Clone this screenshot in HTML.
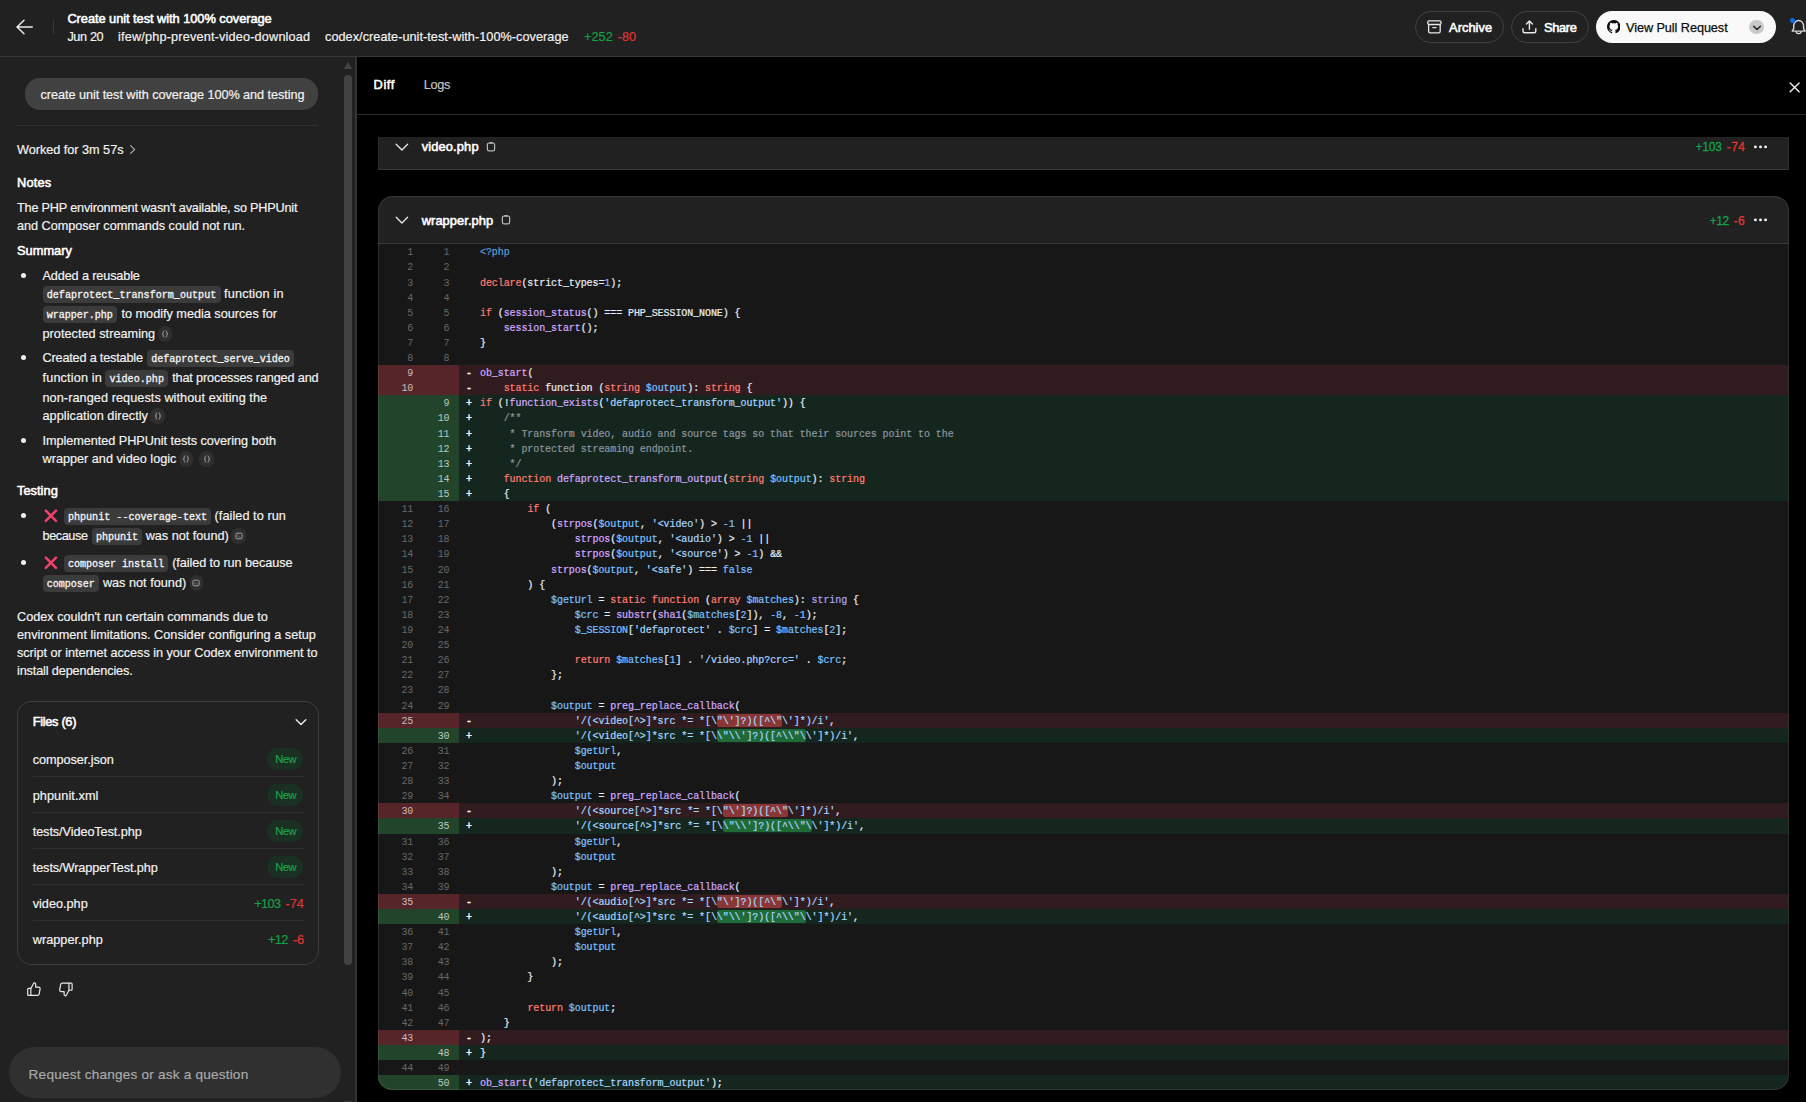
<!DOCTYPE html>
<html><head><meta charset="utf-8"><title>Create unit test with 100% coverage</title>
<style>
html,body{margin:0;padding:0;background:#212121;}
body{width:1806px;height:1102px;position:relative;overflow:hidden;font-family:"Liberation Sans",sans-serif;color:#f3f3f3;}
.a{position:absolute;}
.t{position:absolute;white-space:pre;line-height:16px;height:16px;-webkit-text-stroke:0.18px currentColor;}
.m{font-family:"Liberation Mono",monospace;}
.chip{position:absolute;background:#3b3b3b;border-radius:4px;}
.chip span{position:absolute;left:0;right:0;top:0;bottom:0;text-align:center;white-space:pre;font-family:"Liberation Mono",monospace;font-size:10.1px;color:#f4f4f4;-webkit-text-stroke:0.3px #f4f4f4;}
.cit{position:absolute;background:#2f2f2f;border-radius:7px;}
.row{position:absolute;left:377.5px;width:1411px;}
.g{position:absolute;left:0;top:0;bottom:0;width:81px;}
.n{position:absolute;top:0;bottom:0;text-align:right;font-family:"Liberation Mono",monospace;white-space:pre;}
.c{position:absolute;left:102.5px;top:0;bottom:0;white-space:pre;font-family:"Liberation Mono",monospace;-webkit-text-stroke:0.22px currentColor;}
.c span{-webkit-text-stroke:0.22px currentColor;}
.s{position:absolute;left:88.5px;top:0;bottom:0;white-space:pre;font-family:"Liberation Mono",monospace;color:#f4f8fb;-webkit-text-stroke:0.4px #f4f8fb;}
.sep{position:absolute;height:1px;background:#333333;}
</style></head><body>

<div class="a" style="left:0;top:56px;width:1806px;height:1px;background:#383838"></div>
<div class="a" style="left:356px;top:57px;width:1450px;height:1045px;background:#000"></div>
<div class="a" style="left:355px;top:57px;width:1.5px;height:1045px;background:#333"></div>
<div class="a" style="left:357px;top:114px;width:1449px;height:1px;background:#2c2c2c"></div>
<div class="a" style="left:343.6px;top:75px;width:8.7px;height:890px;background:#424242;border-radius:4.5px"></div>
<svg class="a" style="left:343px;top:61px" width="10" height="9" viewBox="0 0 10 9"><path d="M0.6 8 L5 1 L9.4 8 Z" fill="#424242"/></svg>
<div class="a" style="left:344px;top:1101px;width:8px;height:1px;background:#3c3c3c"></div>
<svg class="a" style="left:15px;top:18px" width="20" height="18" viewBox="0 0 20 18"><path d="M9 2.2 L2 9 L9 15.8 M2.2 9 H17.3" fill="none" stroke="#ececec" stroke-width="1.5" stroke-linecap="round" stroke-linejoin="round"/></svg>
<div class="a" style="left:52.5px;top:20px;width:1px;height:14px;background:#3a3a3a"></div>
<div class="a" style="left:1415.3px;top:10.8px;width:87px;height:30px;border:1px solid #404040;border-radius:16px"></div>
<div class="a" style="left:1511px;top:10.8px;width:76.2px;height:30px;border:1px solid #404040;border-radius:16px"></div>
<div class="a" style="left:1595.5px;top:11px;width:180px;height:32px;background:#f9f9f9;border-radius:16px"></div>
<svg class="a" style="left:1427px;top:20px" width="15" height="14" viewBox="0 0 15 14"><g fill="none" stroke="#e8e8e8" stroke-width="1.3" stroke-linejoin="round" stroke-linecap="round"><rect x="0.8" y="0.9" width="13.2" height="3.6" rx="1.2"/><path d="M1.6 4.6 V11.2 a1.6 1.6 0 0 0 1.6 1.6 H11.6 a1.6 1.6 0 0 0 1.6 -1.6 V4.6"/><path d="M5.8 7.6 H9"/></g></svg>
<svg class="a" style="left:1522px;top:20px" width="15" height="14" viewBox="0 0 15 14"><g fill="none" stroke="#e8e8e8" stroke-width="1.4" stroke-linejoin="round" stroke-linecap="round"><path d="M7.4 9.2 V1.2 M4.4 4 L7.4 1.1 L10.4 4"/><path d="M1 8.6 V11 a1.8 1.8 0 0 0 1.8 1.8 H12 a1.8 1.8 0 0 0 1.8 -1.8 V8.6"/></g></svg>
<svg class="a" style="left:1606.5px;top:20.3px" width="13.6" height="13.6" viewBox="0 0 16 16"><path fill="#0d0d0d" d="M8 0C3.58 0 0 3.58 0 8c0 3.54 2.29 6.53 5.47 7.59.4.07.55-.17.55-.38 0-.19-.01-.82-.01-1.49-2.01.37-2.53-.49-2.69-.94-.09-.23-.48-.94-.82-1.13-.28-.15-.68-.52-.01-.53.63-.01 1.08.58 1.23.82.72 1.21 1.87.87 2.33.66.07-.52.28-.87.51-1.07-1.78-.2-3.64-.89-3.64-3.95 0-.87.31-1.59.82-2.15-.08-.2-.36-1.02.08-2.12 0 0 .67-.21 2.2.82.64-.18 1.32-.27 2-.27s1.36.09 2 .27c1.53-1.04 2.2-.82 2.2-.82.44 1.1.16 1.92.08 2.12.51.56.82 1.27.82 2.15 0 3.07-1.87 3.75-3.65 3.95.29.25.54.73.54 1.48 0 1.07-.01 1.93-.01 2.2 0 .21.15.46.55.38A8.01 8.01 0 0 0 16 8c0-4.42-3.58-8-8-8z"/></svg>
<div class="a" style="left:1749.3px;top:19.6px;width:14.8px;height:14.8px;border-radius:8px;background:#c9c9c9"></div>
<svg class="a" style="left:1751.6px;top:23.6px" width="10" height="8" viewBox="0 0 10 8"><path d="M1.6 2.2 L5 5.6 L8.4 2.2" fill="none" stroke="#222" stroke-width="1.4" stroke-linecap="round" stroke-linejoin="round"/></svg>
<svg class="a" style="left:1786px;top:15px" width="20" height="24" viewBox="1786 15 20 24"><g fill="none" stroke="#d6d6d6" stroke-width="1.45" stroke-linecap="round" stroke-linejoin="round"><path d="M1793.7 26 a4.95 5.5 0 0 1 9.9 0 v2.6 l1.5 2.5 h-12.9 l1.5 -2.5 z"/><path d="M1796.2 31.9 a2.6 2.6 0 0 0 4.9 0"/></g></svg>
<div class="a" style="left:1789.5px;top:18.2px;width:5px;height:5px;border-radius:3px;background:#0b6be8"></div>
<svg class="a" style="left:1788px;top:81px" width="13" height="13" viewBox="0 0 13 13"><path d="M2.2 1.9 L11.1 10.8 M11.1 1.9 L2.2 10.8" fill="none" stroke="#ececec" stroke-width="1.45" stroke-linecap="round"/></svg>
<div class="a" style="left:25.2px;top:78px;width:293px;height:32px;background:#414141;border-radius:15px"></div>
<div class="sep" style="left:17px;top:125px;width:301px;background:#303030"></div>
<svg class="a" style="left:128px;top:144px" width="9" height="11" viewBox="0 0 9 11"><path d="M2.6 1.6 L6.6 5.5 L2.6 9.4" fill="none" stroke="#a8a8a8" stroke-width="1.2" stroke-linecap="round" stroke-linejoin="round"/></svg>
<div class="a" style="left:21.2px;top:273.4px;width:4.8px;height:4.8px;border-radius:3px;background:#f0f0f0"></div>
<div class="a" style="left:21.2px;top:355.4px;width:4.8px;height:4.8px;border-radius:3px;background:#f0f0f0"></div>
<div class="a" style="left:21.2px;top:438.4px;width:4.8px;height:4.8px;border-radius:3px;background:#f0f0f0"></div>
<div class="a" style="left:21.2px;top:513.3px;width:4.8px;height:4.8px;border-radius:3px;background:#f0f0f0"></div>
<div class="a" style="left:21.2px;top:560.1px;width:4.8px;height:4.8px;border-radius:3px;background:#f0f0f0"></div>
<div class="chip" style="left:42.5px;top:286px;width:178.0px;height:17.0px"><span style="line-height:20.0px;letter-spacing:-0.004px;padding-left:-0.004px">defaprotect_transform_output</span></div>
<div class="chip" style="left:42.5px;top:306.2px;width:74.5px;height:17.0px"><span style="line-height:20.0px;letter-spacing:-0.052px;padding-left:-0.052px">wrapper.php</span></div>
<div class="chip" style="left:147px;top:350px;width:147.0px;height:17.0px"><span style="line-height:20.0px;letter-spacing:-0.035px;padding-left:-0.035px">defaprotect_serve_video</span></div>
<div class="chip" style="left:105.2px;top:370.2px;width:63.0px;height:17.0px"><span style="line-height:20.0px;letter-spacing:0.006px;padding-left:0.006px">video.php</span></div>
<div class="chip" style="left:63.7px;top:508px;width:147.7px;height:17.0px"><span style="line-height:20.0px;letter-spacing:-0.004px;padding-left:-0.004px">phpunit --coverage-text</span></div>
<div class="chip" style="left:91.8px;top:527.5px;width:50.3px;height:17.0px"><span style="line-height:20.0px;letter-spacing:-0.075px;padding-left:-0.075px">phpunit</span></div>
<div class="chip" style="left:63.7px;top:554.7px;width:104.5px;height:17.0px"><span style="line-height:20.0px;letter-spacing:-0.055px;padding-left:-0.055px">composer install</span></div>
<div class="chip" style="left:42.5px;top:574.8px;width:56.5px;height:17.0px"><span style="line-height:20.0px;letter-spacing:-0.049px;padding-left:-0.049px">composer</span></div>
<div class="cit" style="left:158.4px;top:326.3px;width:14.1px;height:16px"></div>
<svg class="a" style="left:161.4px;top:330.2px" width="8" height="8" viewBox="0 0 8 8"><path d="M3.3 0.9 C2.3 0.9 2.2 1.4 2.2 2.2 V3 C2.2 3.6 1.9 4 1.2 4 C1.9 4 2.2 4.4 2.2 5 V5.8 C2.2 6.6 2.3 7.1 3.3 7.1 M4.7 0.9 C5.7 0.9 5.8 1.4 5.8 2.2 V3 C5.8 3.6 6.1 4 6.8 4 C6.1 4 5.8 4.4 5.8 5 V5.8 C5.8 6.6 5.7 7.1 4.7 7.1" fill="none" stroke="#a2a2a2" stroke-width="1"/></svg>
<div class="cit" style="left:150.3px;top:408.0px;width:14.7px;height:16px"></div>
<svg class="a" style="left:153.7px;top:411.9px" width="8" height="8" viewBox="0 0 8 8"><path d="M3.3 0.9 C2.3 0.9 2.2 1.4 2.2 2.2 V3 C2.2 3.6 1.9 4 1.2 4 C1.9 4 2.2 4.4 2.2 5 V5.8 C2.2 6.6 2.3 7.1 3.3 7.1 M4.7 0.9 C5.7 0.9 5.8 1.4 5.8 2.2 V3 C5.8 3.6 6.1 4 6.8 4 C6.1 4 5.8 4.4 5.8 5 V5.8 C5.8 6.6 5.7 7.1 4.7 7.1" fill="none" stroke="#a2a2a2" stroke-width="1"/></svg>
<div class="cit" style="left:179px;top:451.1px;width:13.7px;height:16px"></div>
<svg class="a" style="left:181.8px;top:455.0px" width="8" height="8" viewBox="0 0 8 8"><path d="M3.3 0.9 C2.3 0.9 2.2 1.4 2.2 2.2 V3 C2.2 3.6 1.9 4 1.2 4 C1.9 4 2.2 4.4 2.2 5 V5.8 C2.2 6.6 2.3 7.1 3.3 7.1 M4.7 0.9 C5.7 0.9 5.8 1.4 5.8 2.2 V3 C5.8 3.6 6.1 4 6.8 4 C6.1 4 5.8 4.4 5.8 5 V5.8 C5.8 6.6 5.7 7.1 4.7 7.1" fill="none" stroke="#a2a2a2" stroke-width="1"/></svg>
<div class="cit" style="left:199.3px;top:451.1px;width:14.7px;height:16px"></div>
<svg class="a" style="left:202.7px;top:455.0px" width="8" height="8" viewBox="0 0 8 8"><path d="M3.3 0.9 C2.3 0.9 2.2 1.4 2.2 2.2 V3 C2.2 3.6 1.9 4 1.2 4 C1.9 4 2.2 4.4 2.2 5 V5.8 C2.2 6.6 2.3 7.1 3.3 7.1 M4.7 0.9 C5.7 0.9 5.8 1.4 5.8 2.2 V3 C5.8 3.6 6.1 4 6.8 4 C6.1 4 5.8 4.4 5.8 5 V5.8 C5.8 6.6 5.7 7.1 4.7 7.1" fill="none" stroke="#a2a2a2" stroke-width="1"/></svg>
<div class="cit" style="left:231.3px;top:527.7px;width:14.4px;height:16px"></div>
<svg class="a" style="left:234.5px;top:531.6px" width="8" height="8" viewBox="0 0 8 8"><rect x="0.9" y="1.2" width="6.2" height="5.6" rx="1.2" fill="none" stroke="#a2a2a2" stroke-width="1"/><path d="M2.4 3.2 L3.4 4 L2.4 4.8 M4.2 5 H5.6" fill="none" stroke="#a2a2a2" stroke-width="0.7"/></svg>
<div class="cit" style="left:189.5px;top:575.1px;width:13.7px;height:16px"></div>
<svg class="a" style="left:192.3px;top:579.0px" width="8" height="8" viewBox="0 0 8 8"><rect x="0.9" y="1.2" width="6.2" height="5.6" rx="1.2" fill="none" stroke="#a2a2a2" stroke-width="1"/><path d="M2.4 3.2 L3.4 4 L2.4 4.8 M4.2 5 H5.6" fill="none" stroke="#a2a2a2" stroke-width="0.7"/></svg>
<svg class="a" style="left:43px;top:508.1px" width="16" height="15" viewBox="0 0 16 15"><path d="M2.8 2.6 L13 12.8 M13 2.6 L2.8 12.8" fill="none" stroke="#f0416a" stroke-width="2.6" stroke-linecap="round"/></svg>
<svg class="a" style="left:43px;top:554.9px" width="16" height="15" viewBox="0 0 16 15"><path d="M2.8 2.6 L13 12.8 M13 2.6 L2.8 12.8" fill="none" stroke="#f0416a" stroke-width="2.6" stroke-linecap="round"/></svg>
<div class="a" style="left:17px;top:701px;width:300px;height:261.6px;border:1px solid #3d3d3d;border-radius:14px"></div>
<svg class="a" style="left:294px;top:716.6px" width="14" height="11" viewBox="0 0 14 11"><path d="M2.2 2.8 L7 7.6 L11.8 2.8" fill="none" stroke="#f0f0f0" stroke-width="1.4" stroke-linecap="round" stroke-linejoin="round"/></svg>
<div class="sep" style="left:32.7px;top:775.9px;width:271px;background:#2f2f2f"></div>
<div class="sep" style="left:32.7px;top:811.9px;width:271px;background:#2f2f2f"></div>
<div class="sep" style="left:32.7px;top:847.9px;width:271px;background:#2f2f2f"></div>
<div class="sep" style="left:32.7px;top:883.9px;width:271px;background:#2f2f2f"></div>
<div class="sep" style="left:32.7px;top:919.9px;width:271px;background:#2f2f2f"></div>
<div class="a" style="left:267.3px;top:748.2px;width:36px;height:21.4px;border-radius:11px;background:#1a3022"></div>
<div class="a" style="left:267.3px;top:784.2px;width:36px;height:21.4px;border-radius:11px;background:#1a3022"></div>
<div class="a" style="left:267.3px;top:820.2px;width:36px;height:21.4px;border-radius:11px;background:#1a3022"></div>
<div class="a" style="left:267.3px;top:856.2px;width:36px;height:21.4px;border-radius:11px;background:#1a3022"></div>
<svg class="a" style="left:25.6px;top:981px" width="15.8" height="16.7" viewBox="0 0 17 18"><g fill="none" stroke="#e8e8e8" stroke-width="1.3" stroke-linejoin="round" stroke-linecap="round"><path d="M5.2 8 V15.6 H2.8 a1 1 0 0 1 -1 -1 V9 a1 1 0 0 1 1 -1 Z"/><path d="M5.2 8 L8.2 2.4 c0.4 -0.8 2.2 -0.4 2.2 1 V6.6 H13.6 a1.6 1.6 0 0 1 1.6 1.9 L14.2 14 a2 2 0 0 1 -2 1.6 H5.2"/></g></svg>
<svg class="a" style="left:57.6px;top:980.6px" width="15.8" height="16.7" viewBox="0 0 17 18"><g transform="rotate(180 8.5 9)" fill="none" stroke="#e8e8e8" stroke-width="1.3" stroke-linejoin="round" stroke-linecap="round"><path d="M5.2 8 V15.6 H2.8 a1 1 0 0 1 -1 -1 V9 a1 1 0 0 1 1 -1 Z"/><path d="M5.2 8 L8.2 2.4 c0.4 -0.8 2.2 -0.4 2.2 1 V6.6 H13.6 a1.6 1.6 0 0 1 1.6 1.9 L14.2 14 a2 2 0 0 1 -2 1.6 H5.2"/></g></svg>
<div class="a" style="left:9px;top:1046.5px;width:332px;height:51.5px;background:#303030;border-radius:26px"></div>
<div class="a" style="left:377.5px;top:137px;width:1411px;height:32px;background:#212121;border-bottom:1px solid #3a3a3a;border-left:1px solid #2c2c2c;border-right:1px solid #2c2c2c;box-sizing:border-box;height:33px"></div>
<div class="a" style="left:377.5px;top:196.4px;width:1411px;height:893.6px;background:#171717;border-radius:14.5px;overflow:hidden;box-sizing:border-box" id="card">
<div class="a" style="left:0;top:0;width:1411px;height:46.6px;background:#212121;border-bottom:1px solid #383838"></div>
</div>
<svg class="a" style="left:394px;top:141.5px" width="16" height="11" viewBox="0 0 16 11"><path d="M2.2 2.2 L7.9 8 L13.6 2.2" fill="none" stroke="#e8e8e8" stroke-width="1.3" stroke-linecap="round" stroke-linejoin="round"/></svg>
<svg class="a" style="left:486.4px;top:140.5px" width="10" height="11" viewBox="0 0 10 11"><rect x="1.4" y="2" width="7.2" height="7.8" rx="1.6" fill="none" stroke="#b8b8b8" stroke-width="1.2"/><rect x="3.3" y="0.9" width="3.4" height="1.8" rx="0.6" fill="#b8b8b8"/></svg>
<svg class="a" style="left:1752px;top:142.5px" width="18" height="8" viewBox="0 0 18 8"><circle cx="3.4" cy="3.9" r="1.45" fill="#f2f2f2"/><circle cx="8.5" cy="3.9" r="1.45" fill="#f2f2f2"/><circle cx="13.6" cy="3.9" r="1.45" fill="#f2f2f2"/></svg>
<svg class="a" style="left:394px;top:215.3px" width="16" height="11" viewBox="0 0 16 11"><path d="M2.2 2.2 L7.9 8 L13.6 2.2" fill="none" stroke="#e8e8e8" stroke-width="1.3" stroke-linecap="round" stroke-linejoin="round"/></svg>
<svg class="a" style="left:500.9px;top:214.3px" width="10" height="11" viewBox="0 0 10 11"><rect x="1.4" y="2" width="7.2" height="7.8" rx="1.6" fill="none" stroke="#b8b8b8" stroke-width="1.2"/><rect x="3.3" y="0.9" width="3.4" height="1.8" rx="0.6" fill="#b8b8b8"/></svg>
<svg class="a" style="left:1752px;top:216.3px" width="18" height="8" viewBox="0 0 18 8"><circle cx="3.4" cy="3.9" r="1.45" fill="#f2f2f2"/><circle cx="8.5" cy="3.9" r="1.45" fill="#f2f2f2"/><circle cx="13.6" cy="3.9" r="1.45" fill="#f2f2f2"/></svg>
<div class="a" style="left:0;top:0;width:1806px;height:1102px;clip-path:inset(196.4px 17.5px 12px 377.5px round 14.5px)">
<div class="row" style="top:244px;height:15px;line-height:17.0px;font-size:10.0px;letter-spacing:-0.081px;">
<div class="n" style="left:0;width:35.78px;color:#676767">1</div>
<div class="n" style="left:36px;width:35.98px;color:#676767">1</div>
<div class="c"><span style="color:#569cd6;">&lt;?php</span></div>
</div>
<div class="row" style="top:259px;height:16px;line-height:18.0px;font-size:10.0px;letter-spacing:-0.081px;">
<div class="n" style="left:0;width:35.78px;color:#676767">2</div>
<div class="n" style="left:36px;width:35.98px;color:#676767">2</div>
</div>
<div class="row" style="top:275px;height:15px;line-height:17.0px;font-size:10.0px;letter-spacing:-0.081px;">
<div class="n" style="left:0;width:35.78px;color:#676767">3</div>
<div class="n" style="left:36px;width:35.98px;color:#676767">3</div>
<div class="c"><span style="color:#ff7b72;">declare</span><span style="color:#e6edf3;">(strict_types=</span><span style="color:#79c0ff;">1</span><span style="color:#e6edf3;">);</span></div>
</div>
<div class="row" style="top:290px;height:15px;line-height:17.0px;font-size:10.0px;letter-spacing:-0.081px;">
<div class="n" style="left:0;width:35.78px;color:#676767">4</div>
<div class="n" style="left:36px;width:35.98px;color:#676767">4</div>
</div>
<div class="row" style="top:305px;height:15px;line-height:17.0px;font-size:10.0px;letter-spacing:-0.081px;">
<div class="n" style="left:0;width:35.78px;color:#676767">5</div>
<div class="n" style="left:36px;width:35.98px;color:#676767">5</div>
<div class="c"><span style="color:#ff7b72;">if</span><span style="color:#e6edf3;"> (</span><span style="color:#d2a8ff;">session_status</span><span style="color:#e6edf3;">() === PHP_SESSION_NONE) {</span></div>
</div>
<div class="row" style="top:320px;height:15px;line-height:17.0px;font-size:10.0px;letter-spacing:-0.081px;">
<div class="n" style="left:0;width:35.78px;color:#676767">6</div>
<div class="n" style="left:36px;width:35.98px;color:#676767">6</div>
<div class="c"><span style="color:#e6edf3;">    </span><span style="color:#d2a8ff;">session_start</span><span style="color:#e6edf3;">();</span></div>
</div>
<div class="row" style="top:335px;height:15px;line-height:17.0px;font-size:10.0px;letter-spacing:-0.081px;">
<div class="n" style="left:0;width:35.78px;color:#676767">7</div>
<div class="n" style="left:36px;width:35.98px;color:#676767">7</div>
<div class="c"><span style="color:#e6edf3;">}</span></div>
</div>
<div class="row" style="top:350px;height:15px;line-height:17.0px;font-size:10.0px;letter-spacing:-0.081px;">
<div class="n" style="left:0;width:35.78px;color:#676767">8</div>
<div class="n" style="left:36px;width:35.98px;color:#676767">8</div>
</div>
<div class="row" style="top:365px;height:15px;line-height:17.0px;font-size:10.0px;letter-spacing:-0.081px;background:#301b1f;">
<div class="g" style="background:#562529"></div>
<div class="n" style="left:0;width:35.78px;color:#c9bcbd">9</div>
<div class="s">-</div>
<div class="c"><span style="color:#d2a8ff;">ob_start</span><span style="color:#e6edf3;">(</span></div>
</div>
<div class="row" style="top:380px;height:15px;line-height:17.0px;font-size:10.0px;letter-spacing:-0.081px;background:#301b1f;">
<div class="g" style="background:#562529"></div>
<div class="n" style="left:0;width:35.78px;color:#c9bcbd">10</div>
<div class="s">-</div>
<div class="c"><span style="color:#e6edf3;">    </span><span style="color:#ff7b72;">static</span><span style="color:#e6edf3;"> function (</span><span style="color:#ff7b72;">string</span><span style="color:#e6edf3;"> </span><span style="color:#79c0ff;">$output</span><span style="color:#e6edf3;">): </span><span style="color:#ff7b72;">string</span><span style="color:#e6edf3;"> {</span></div>
</div>
<div class="row" style="top:395px;height:15px;line-height:17.0px;font-size:10.0px;letter-spacing:-0.081px;background:#15261f;">
<div class="g" style="background:#21442b"></div>
<div class="n" style="left:36px;width:35.98px;color:#bcc8bf">9</div>
<div class="s">+</div>
<div class="c"><span style="color:#ff7b72;">if</span><span style="color:#e6edf3;"> (!</span><span style="color:#d2a8ff;">function_exists</span><span style="color:#e6edf3;">(</span><span style="color:#a5d6ff;">'defaprotect_transform_output'</span><span style="color:#e6edf3;">)) {</span></div>
</div>
<div class="row" style="top:410px;height:16px;line-height:18.0px;font-size:10.0px;letter-spacing:-0.081px;background:#15261f;">
<div class="g" style="background:#21442b"></div>
<div class="n" style="left:36px;width:35.98px;color:#bcc8bf">10</div>
<div class="s">+</div>
<div class="c"><span style="color:#8b949e;">    /**</span></div>
</div>
<div class="row" style="top:426px;height:15px;line-height:17.0px;font-size:10.0px;letter-spacing:-0.081px;background:#15261f;">
<div class="g" style="background:#21442b"></div>
<div class="n" style="left:36px;width:35.98px;color:#bcc8bf">11</div>
<div class="s">+</div>
<div class="c"><span style="color:#8b949e;">     * Transform video, audio and source tags so that their sources point to the</span></div>
</div>
<div class="row" style="top:441px;height:15px;line-height:17.0px;font-size:10.0px;letter-spacing:-0.081px;background:#15261f;">
<div class="g" style="background:#21442b"></div>
<div class="n" style="left:36px;width:35.98px;color:#bcc8bf">12</div>
<div class="s">+</div>
<div class="c"><span style="color:#8b949e;">     * protected streaming endpoint.</span></div>
</div>
<div class="row" style="top:456px;height:15px;line-height:17.0px;font-size:10.0px;letter-spacing:-0.081px;background:#15261f;">
<div class="g" style="background:#21442b"></div>
<div class="n" style="left:36px;width:35.98px;color:#bcc8bf">13</div>
<div class="s">+</div>
<div class="c"><span style="color:#8b949e;">     */</span></div>
</div>
<div class="row" style="top:471px;height:15px;line-height:17.0px;font-size:10.0px;letter-spacing:-0.081px;background:#15261f;">
<div class="g" style="background:#21442b"></div>
<div class="n" style="left:36px;width:35.98px;color:#bcc8bf">14</div>
<div class="s">+</div>
<div class="c"><span style="color:#e6edf3;">    </span><span style="color:#ff7b72;">function</span><span style="color:#e6edf3;"> </span><span style="color:#d2a8ff;">defaprotect_transform_output</span><span style="color:#e6edf3;">(</span><span style="color:#ff7b72;">string</span><span style="color:#e6edf3;"> </span><span style="color:#79c0ff;">$output</span><span style="color:#e6edf3;">): </span><span style="color:#ff7b72;">string</span></div>
</div>
<div class="row" style="top:486px;height:15px;line-height:17.0px;font-size:10.0px;letter-spacing:-0.081px;background:#15261f;">
<div class="g" style="background:#21442b"></div>
<div class="n" style="left:36px;width:35.98px;color:#bcc8bf">15</div>
<div class="s">+</div>
<div class="c"><span style="color:#e6edf3;">    {</span></div>
</div>
<div class="row" style="top:501px;height:15px;line-height:17.0px;font-size:10.0px;letter-spacing:-0.081px;">
<div class="n" style="left:0;width:35.78px;color:#676767">11</div>
<div class="n" style="left:36px;width:35.98px;color:#676767">16</div>
<div class="c"><span style="color:#e6edf3;">        </span><span style="color:#ff7b72;">if</span><span style="color:#e6edf3;"> (</span></div>
</div>
<div class="row" style="top:516px;height:15px;line-height:17.0px;font-size:10.0px;letter-spacing:-0.081px;">
<div class="n" style="left:0;width:35.78px;color:#676767">12</div>
<div class="n" style="left:36px;width:35.98px;color:#676767">17</div>
<div class="c"><span style="color:#e6edf3;">            (</span><span style="color:#d2a8ff;">strpos</span><span style="color:#e6edf3;">(</span><span style="color:#79c0ff;">$output</span><span style="color:#e6edf3;">, </span><span style="color:#a5d6ff;">'&lt;video'</span><span style="color:#e6edf3;">) &gt; </span><span style="color:#79c0ff;">-1</span><span style="color:#e6edf3;"> ||</span></div>
</div>
<div class="row" style="top:531px;height:15px;line-height:17.0px;font-size:10.0px;letter-spacing:-0.081px;">
<div class="n" style="left:0;width:35.78px;color:#676767">13</div>
<div class="n" style="left:36px;width:35.98px;color:#676767">18</div>
<div class="c"><span style="color:#e6edf3;">                </span><span style="color:#d2a8ff;">strpos</span><span style="color:#e6edf3;">(</span><span style="color:#79c0ff;">$output</span><span style="color:#e6edf3;">, </span><span style="color:#a5d6ff;">'&lt;audio'</span><span style="color:#e6edf3;">) &gt; </span><span style="color:#79c0ff;">-1</span><span style="color:#e6edf3;"> ||</span></div>
</div>
<div class="row" style="top:546px;height:16px;line-height:18.0px;font-size:10.0px;letter-spacing:-0.081px;">
<div class="n" style="left:0;width:35.78px;color:#676767">14</div>
<div class="n" style="left:36px;width:35.98px;color:#676767">19</div>
<div class="c"><span style="color:#e6edf3;">                </span><span style="color:#d2a8ff;">strpos</span><span style="color:#e6edf3;">(</span><span style="color:#79c0ff;">$output</span><span style="color:#e6edf3;">, </span><span style="color:#a5d6ff;">'&lt;source'</span><span style="color:#e6edf3;">) &gt; </span><span style="color:#79c0ff;">-1</span><span style="color:#e6edf3;">) &amp;&amp;</span></div>
</div>
<div class="row" style="top:562px;height:15px;line-height:17.0px;font-size:10.0px;letter-spacing:-0.081px;">
<div class="n" style="left:0;width:35.78px;color:#676767">15</div>
<div class="n" style="left:36px;width:35.98px;color:#676767">20</div>
<div class="c"><span style="color:#e6edf3;">            </span><span style="color:#d2a8ff;">strpos</span><span style="color:#e6edf3;">(</span><span style="color:#79c0ff;">$output</span><span style="color:#e6edf3;">, </span><span style="color:#a5d6ff;">'&lt;safe'</span><span style="color:#e6edf3;">) === </span><span style="color:#79c0ff;">false</span></div>
</div>
<div class="row" style="top:577px;height:15px;line-height:17.0px;font-size:10.0px;letter-spacing:-0.081px;">
<div class="n" style="left:0;width:35.78px;color:#676767">16</div>
<div class="n" style="left:36px;width:35.98px;color:#676767">21</div>
<div class="c"><span style="color:#e6edf3;">        ) {</span></div>
</div>
<div class="row" style="top:592px;height:15px;line-height:17.0px;font-size:10.0px;letter-spacing:-0.081px;">
<div class="n" style="left:0;width:35.78px;color:#676767">17</div>
<div class="n" style="left:36px;width:35.98px;color:#676767">22</div>
<div class="c"><span style="color:#e6edf3;">            </span><span style="color:#79c0ff;">$getUrl</span><span style="color:#e6edf3;"> = </span><span style="color:#ff7b72;">static</span><span style="color:#e6edf3;"> </span><span style="color:#ff7b72;">function</span><span style="color:#e6edf3;"> (</span><span style="color:#ff7b72;">array</span><span style="color:#e6edf3;"> </span><span style="color:#79c0ff;">$matches</span><span style="color:#e6edf3;">): </span><span style="color:#aaa2f2;">string</span><span style="color:#e6edf3;"> {</span></div>
</div>
<div class="row" style="top:607px;height:15px;line-height:17.0px;font-size:10.0px;letter-spacing:-0.081px;">
<div class="n" style="left:0;width:35.78px;color:#676767">18</div>
<div class="n" style="left:36px;width:35.98px;color:#676767">23</div>
<div class="c"><span style="color:#e6edf3;">                </span><span style="color:#79c0ff;">$crc</span><span style="color:#e6edf3;"> = </span><span style="color:#d2a8ff;">substr</span><span style="color:#e6edf3;">(</span><span style="color:#d2a8ff;">sha1</span><span style="color:#e6edf3;">(</span><span style="color:#79c0ff;">$matches</span><span style="color:#e6edf3;">[</span><span style="color:#79c0ff;">2</span><span style="color:#e6edf3;">]), </span><span style="color:#79c0ff;">-8</span><span style="color:#e6edf3;">, </span><span style="color:#79c0ff;">-1</span><span style="color:#e6edf3;">);</span></div>
</div>
<div class="row" style="top:622px;height:15px;line-height:17.0px;font-size:10.0px;letter-spacing:-0.081px;">
<div class="n" style="left:0;width:35.78px;color:#676767">19</div>
<div class="n" style="left:36px;width:35.98px;color:#676767">24</div>
<div class="c"><span style="color:#e6edf3;">                </span><span style="color:#79c0ff;">$_SESSION</span><span style="color:#e6edf3;">[</span><span style="color:#a5d6ff;">'defaprotect'</span><span style="color:#e6edf3;"> . </span><span style="color:#79c0ff;">$crc</span><span style="color:#e6edf3;">] = </span><span style="color:#79c0ff;">$matches</span><span style="color:#e6edf3;">[</span><span style="color:#79c0ff;">2</span><span style="color:#e6edf3;">];</span></div>
</div>
<div class="row" style="top:637px;height:15px;line-height:17.0px;font-size:10.0px;letter-spacing:-0.081px;">
<div class="n" style="left:0;width:35.78px;color:#676767">20</div>
<div class="n" style="left:36px;width:35.98px;color:#676767">25</div>
</div>
<div class="row" style="top:652px;height:15px;line-height:17.0px;font-size:10.0px;letter-spacing:-0.081px;">
<div class="n" style="left:0;width:35.78px;color:#676767">21</div>
<div class="n" style="left:36px;width:35.98px;color:#676767">26</div>
<div class="c"><span style="color:#e6edf3;">                </span><span style="color:#ff7b72;">return</span><span style="color:#e6edf3;"> </span><span style="color:#79c0ff;">$matches</span><span style="color:#e6edf3;">[</span><span style="color:#79c0ff;">1</span><span style="color:#e6edf3;">] . </span><span style="color:#a5d6ff;">'/video.php?crc='</span><span style="color:#e6edf3;"> . </span><span style="color:#79c0ff;">$crc</span><span style="color:#e6edf3;">;</span></div>
</div>
<div class="row" style="top:667px;height:15px;line-height:17.0px;font-size:10.0px;letter-spacing:-0.081px;">
<div class="n" style="left:0;width:35.78px;color:#676767">22</div>
<div class="n" style="left:36px;width:35.98px;color:#676767">27</div>
<div class="c"><span style="color:#e6edf3;">            };</span></div>
</div>
<div class="row" style="top:682px;height:16px;line-height:18.0px;font-size:10.0px;letter-spacing:-0.081px;">
<div class="n" style="left:0;width:35.78px;color:#676767">23</div>
<div class="n" style="left:36px;width:35.98px;color:#676767">28</div>
</div>
<div class="row" style="top:698px;height:15px;line-height:17.0px;font-size:10.0px;letter-spacing:-0.081px;">
<div class="n" style="left:0;width:35.78px;color:#676767">24</div>
<div class="n" style="left:36px;width:35.98px;color:#676767">29</div>
<div class="c"><span style="color:#e6edf3;">            </span><span style="color:#79c0ff;">$output</span><span style="color:#e6edf3;"> = </span><span style="color:#d2a8ff;">preg_replace_callback</span><span style="color:#e6edf3;">(</span></div>
</div>
<div class="row" style="top:713px;height:15px;line-height:17.0px;font-size:10.0px;letter-spacing:-0.081px;background:#301b1f;">
<div class="g" style="background:#562529"></div>
<div class="n" style="left:0;width:35.78px;color:#c9bcbd">25</div>
<div class="s">-</div>
<div class="c"><span style="color:#e6edf3;">                </span><span style="color:#a5d6ff;">'/(&lt;video[^&gt;]*src *= *[\</span><span style="color:#a5d6ff;background:#8a3634;border-radius:2.5px;padding:2.4px 0 0;">"\']?)([^\"</span><span style="color:#a5d6ff;">\']*)/i'</span><span style="color:#e6edf3;">,</span></div>
</div>
<div class="row" style="top:728px;height:15px;line-height:17.0px;font-size:10.0px;letter-spacing:-0.081px;background:#15261f;">
<div class="g" style="background:#21442b"></div>
<div class="n" style="left:36px;width:35.98px;color:#bcc8bf">30</div>
<div class="s">+</div>
<div class="c"><span style="color:#e6edf3;">                </span><span style="color:#a5d6ff;">'/(&lt;video[^&gt;]*src *= *[\</span><span style="color:#a5d6ff;background:#1f6a36;border-radius:2.5px;padding:2.4px 0 0;">\"\\']?)([^\\"\</span><span style="color:#a5d6ff;">\']*)/i'</span><span style="color:#e6edf3;">,</span></div>
</div>
<div class="row" style="top:743px;height:15px;line-height:17.0px;font-size:10.0px;letter-spacing:-0.081px;">
<div class="n" style="left:0;width:35.78px;color:#676767">26</div>
<div class="n" style="left:36px;width:35.98px;color:#676767">31</div>
<div class="c"><span style="color:#e6edf3;">                </span><span style="color:#79c0ff;">$getUrl</span><span style="color:#e6edf3;">,</span></div>
</div>
<div class="row" style="top:758px;height:15px;line-height:17.0px;font-size:10.0px;letter-spacing:-0.081px;">
<div class="n" style="left:0;width:35.78px;color:#676767">27</div>
<div class="n" style="left:36px;width:35.98px;color:#676767">32</div>
<div class="c"><span style="color:#e6edf3;">                </span><span style="color:#79c0ff;">$output</span></div>
</div>
<div class="row" style="top:773px;height:15px;line-height:17.0px;font-size:10.0px;letter-spacing:-0.081px;">
<div class="n" style="left:0;width:35.78px;color:#676767">28</div>
<div class="n" style="left:36px;width:35.98px;color:#676767">33</div>
<div class="c"><span style="color:#e6edf3;">            );</span></div>
</div>
<div class="row" style="top:788px;height:15px;line-height:17.0px;font-size:10.0px;letter-spacing:-0.081px;">
<div class="n" style="left:0;width:35.78px;color:#676767">29</div>
<div class="n" style="left:36px;width:35.98px;color:#676767">34</div>
<div class="c"><span style="color:#e6edf3;">            </span><span style="color:#79c0ff;">$output</span><span style="color:#e6edf3;"> = </span><span style="color:#d2a8ff;">preg_replace_callback</span><span style="color:#e6edf3;">(</span></div>
</div>
<div class="row" style="top:803px;height:15px;line-height:17.0px;font-size:10.0px;letter-spacing:-0.081px;background:#301b1f;">
<div class="g" style="background:#562529"></div>
<div class="n" style="left:0;width:35.78px;color:#c9bcbd">30</div>
<div class="s">-</div>
<div class="c"><span style="color:#e6edf3;">                </span><span style="color:#a5d6ff;">'/(&lt;source[^&gt;]*src *= *[\</span><span style="color:#a5d6ff;background:#8a3634;border-radius:2.5px;padding:2.4px 0 0;">"\']?)([^\"</span><span style="color:#a5d6ff;">\']*)/i'</span><span style="color:#e6edf3;">,</span></div>
</div>
<div class="row" style="top:818px;height:16px;line-height:18.0px;font-size:10.0px;letter-spacing:-0.081px;background:#15261f;">
<div class="g" style="background:#21442b"></div>
<div class="n" style="left:36px;width:35.98px;color:#bcc8bf">35</div>
<div class="s">+</div>
<div class="c"><span style="color:#e6edf3;">                </span><span style="color:#a5d6ff;">'/(&lt;source[^&gt;]*src *= *[\</span><span style="color:#a5d6ff;background:#1f6a36;border-radius:2.5px;padding:2.4px 0 0;">\"\\']?)([^\\"\</span><span style="color:#a5d6ff;">\']*)/i'</span><span style="color:#e6edf3;">,</span></div>
</div>
<div class="row" style="top:834px;height:15px;line-height:17.0px;font-size:10.0px;letter-spacing:-0.081px;">
<div class="n" style="left:0;width:35.78px;color:#676767">31</div>
<div class="n" style="left:36px;width:35.98px;color:#676767">36</div>
<div class="c"><span style="color:#e6edf3;">                </span><span style="color:#79c0ff;">$getUrl</span><span style="color:#e6edf3;">,</span></div>
</div>
<div class="row" style="top:849px;height:15px;line-height:17.0px;font-size:10.0px;letter-spacing:-0.081px;">
<div class="n" style="left:0;width:35.78px;color:#676767">32</div>
<div class="n" style="left:36px;width:35.98px;color:#676767">37</div>
<div class="c"><span style="color:#e6edf3;">                </span><span style="color:#79c0ff;">$output</span></div>
</div>
<div class="row" style="top:864px;height:15px;line-height:17.0px;font-size:10.0px;letter-spacing:-0.081px;">
<div class="n" style="left:0;width:35.78px;color:#676767">33</div>
<div class="n" style="left:36px;width:35.98px;color:#676767">38</div>
<div class="c"><span style="color:#e6edf3;">            );</span></div>
</div>
<div class="row" style="top:879px;height:15px;line-height:17.0px;font-size:10.0px;letter-spacing:-0.081px;">
<div class="n" style="left:0;width:35.78px;color:#676767">34</div>
<div class="n" style="left:36px;width:35.98px;color:#676767">39</div>
<div class="c"><span style="color:#e6edf3;">            </span><span style="color:#79c0ff;">$output</span><span style="color:#e6edf3;"> = </span><span style="color:#d2a8ff;">preg_replace_callback</span><span style="color:#e6edf3;">(</span></div>
</div>
<div class="row" style="top:894px;height:15px;line-height:17.0px;font-size:10.0px;letter-spacing:-0.081px;background:#301b1f;">
<div class="g" style="background:#562529"></div>
<div class="n" style="left:0;width:35.78px;color:#c9bcbd">35</div>
<div class="s">-</div>
<div class="c"><span style="color:#e6edf3;">                </span><span style="color:#a5d6ff;">'/(&lt;audio[^&gt;]*src *= *[\</span><span style="color:#a5d6ff;background:#8a3634;border-radius:2.5px;padding:2.4px 0 0;">"\']?)([^\"</span><span style="color:#a5d6ff;">\']*)/i'</span><span style="color:#e6edf3;">,</span></div>
</div>
<div class="row" style="top:909px;height:15px;line-height:17.0px;font-size:10.0px;letter-spacing:-0.081px;background:#15261f;">
<div class="g" style="background:#21442b"></div>
<div class="n" style="left:36px;width:35.98px;color:#bcc8bf">40</div>
<div class="s">+</div>
<div class="c"><span style="color:#e6edf3;">                </span><span style="color:#a5d6ff;">'/(&lt;audio[^&gt;]*src *= *[\</span><span style="color:#a5d6ff;background:#1f6a36;border-radius:2.5px;padding:2.4px 0 0;">\"\\']?)([^\\"\</span><span style="color:#a5d6ff;">\']*)/i'</span><span style="color:#e6edf3;">,</span></div>
</div>
<div class="row" style="top:924px;height:15px;line-height:17.0px;font-size:10.0px;letter-spacing:-0.081px;">
<div class="n" style="left:0;width:35.78px;color:#676767">36</div>
<div class="n" style="left:36px;width:35.98px;color:#676767">41</div>
<div class="c"><span style="color:#e6edf3;">                </span><span style="color:#79c0ff;">$getUrl</span><span style="color:#e6edf3;">,</span></div>
</div>
<div class="row" style="top:939px;height:15px;line-height:17.0px;font-size:10.0px;letter-spacing:-0.081px;">
<div class="n" style="left:0;width:35.78px;color:#676767">37</div>
<div class="n" style="left:36px;width:35.98px;color:#676767">42</div>
<div class="c"><span style="color:#e6edf3;">                </span><span style="color:#79c0ff;">$output</span></div>
</div>
<div class="row" style="top:954px;height:15px;line-height:17.0px;font-size:10.0px;letter-spacing:-0.081px;">
<div class="n" style="left:0;width:35.78px;color:#676767">38</div>
<div class="n" style="left:36px;width:35.98px;color:#676767">43</div>
<div class="c"><span style="color:#e6edf3;">            );</span></div>
</div>
<div class="row" style="top:969px;height:16px;line-height:18.0px;font-size:10.0px;letter-spacing:-0.081px;">
<div class="n" style="left:0;width:35.78px;color:#676767">39</div>
<div class="n" style="left:36px;width:35.98px;color:#676767">44</div>
<div class="c"><span style="color:#e6edf3;">        }</span></div>
</div>
<div class="row" style="top:985px;height:15px;line-height:17.0px;font-size:10.0px;letter-spacing:-0.081px;">
<div class="n" style="left:0;width:35.78px;color:#676767">40</div>
<div class="n" style="left:36px;width:35.98px;color:#676767">45</div>
</div>
<div class="row" style="top:1000px;height:15px;line-height:17.0px;font-size:10.0px;letter-spacing:-0.081px;">
<div class="n" style="left:0;width:35.78px;color:#676767">41</div>
<div class="n" style="left:36px;width:35.98px;color:#676767">46</div>
<div class="c"><span style="color:#e6edf3;">        </span><span style="color:#ff7b72;">return</span><span style="color:#e6edf3;"> </span><span style="color:#79c0ff;">$output</span><span style="color:#e6edf3;">;</span></div>
</div>
<div class="row" style="top:1015px;height:15px;line-height:17.0px;font-size:10.0px;letter-spacing:-0.081px;">
<div class="n" style="left:0;width:35.78px;color:#676767">42</div>
<div class="n" style="left:36px;width:35.98px;color:#676767">47</div>
<div class="c"><span style="color:#e6edf3;">    }</span></div>
</div>
<div class="row" style="top:1030px;height:15px;line-height:17.0px;font-size:10.0px;letter-spacing:-0.081px;background:#301b1f;">
<div class="g" style="background:#562529"></div>
<div class="n" style="left:0;width:35.78px;color:#c9bcbd">43</div>
<div class="s">-</div>
<div class="c"><span style="color:#e6edf3;">);</span></div>
</div>
<div class="row" style="top:1045px;height:15px;line-height:17.0px;font-size:10.0px;letter-spacing:-0.081px;background:#15261f;">
<div class="g" style="background:#21442b"></div>
<div class="n" style="left:36px;width:35.98px;color:#bcc8bf">48</div>
<div class="s">+</div>
<div class="c"><span style="color:#e6edf3;">}</span></div>
</div>
<div class="row" style="top:1060px;height:15px;line-height:17.0px;font-size:10.0px;letter-spacing:-0.081px;">
<div class="n" style="left:0;width:35.78px;color:#676767">44</div>
<div class="n" style="left:36px;width:35.98px;color:#676767">49</div>
</div>
<div class="row" style="top:1075px;height:15px;line-height:17.0px;font-size:10.0px;letter-spacing:-0.081px;background:#15261f;">
<div class="g" style="background:#21442b"></div>
<div class="n" style="left:36px;width:35.98px;color:#bcc8bf">50</div>
<div class="s">+</div>
<div class="c"><span style="color:#d2a8ff;">ob_start</span><span style="color:#e6edf3;">(</span><span style="color:#a5d6ff;">'defaprotect_transform_output'</span><span style="color:#e6edf3;">);</span></div>
</div>
</div>
<div class="a" style="left:377.5px;top:196.4px;width:1411px;height:893.6px;border:1px solid rgba(255,255,255,0.09);border-radius:14.5px;box-sizing:border-box"></div>
<span class="t" style="left:67.4px;top:11.39px;font-size:12.85px;font-weight:400;color:#ffffff;letter-spacing:-0.058px;-webkit-text-stroke:0.55px currentColor;">Create unit test with 100% coverage</span>
<span class="t" style="left:67.4px;top:29.30px;font-size:12.7px;font-weight:400;color:#f3f3f3;letter-spacing:-0.366px;">Jun 20</span>
<span class="t" style="left:118.0px;top:29.30px;font-size:12.7px;font-weight:400;color:#f3f3f3;letter-spacing:0.174px;">ifew/php-prevent-video-download</span>
<span class="t" style="left:325.0px;top:29.30px;font-size:12.7px;font-weight:400;color:#f3f3f3;letter-spacing:0.042px;">codex/create-unit-test-with-100%-coverage</span>
<span class="t" style="left:584.1px;top:29.30px;font-size:12.7px;font-weight:400;color:#12a147;letter-spacing:0.030px;">+252</span>
<span class="t" style="left:617.8px;top:29.30px;font-size:12.7px;font-weight:400;color:#e23431;letter-spacing:-0.048px;">-80</span>
<span class="t" style="left:1449.1px;top:19.99px;font-size:12.85px;font-weight:400;color:#ffffff;letter-spacing:0.025px;-webkit-text-stroke:0.55px currentColor;">Archive</span>
<span class="t" style="left:1544.1px;top:19.99px;font-size:12.85px;font-weight:400;color:#ffffff;letter-spacing:-0.376px;-webkit-text-stroke:0.55px currentColor;">Share</span>
<span class="t" style="left:1626.0px;top:20.00px;font-size:12.7px;font-weight:400;color:#0d0d0d;letter-spacing:-0.067px;-webkit-text-stroke:0.25px #0d0d0d;">View Pull Request</span>
<span class="t" style="left:40.5px;top:87.30px;font-size:12.7px;font-weight:400;color:#f3f3f3;letter-spacing:-0.053px;">create unit test with coverage 100% and testing</span>
<span class="t" style="left:17.0px;top:142.30px;font-size:12.7px;font-weight:400;color:#f3f3f3;letter-spacing:-0.027px;">Worked for 3m 57s</span>
<span class="t" style="left:17.0px;top:174.79px;font-size:12.85px;font-weight:400;color:#ffffff;letter-spacing:0.147px;-webkit-text-stroke:0.55px currentColor;">Notes</span>
<span class="t" style="left:17.0px;top:200.40px;font-size:12.7px;font-weight:400;color:#f3f3f3;letter-spacing:-0.200px;">The PHP environment wasn't available, so PHPUnit</span>
<span class="t" style="left:17.0px;top:218.40px;font-size:12.7px;font-weight:400;color:#f3f3f3;letter-spacing:-0.033px;">and Composer commands could not run.</span>
<span class="t" style="left:17.0px;top:243.29px;font-size:12.85px;font-weight:400;color:#ffffff;letter-spacing:-0.008px;-webkit-text-stroke:0.55px currentColor;">Summary</span>
<span class="t" style="left:42.5px;top:267.50px;font-size:12.7px;font-weight:400;color:#f3f3f3;letter-spacing:-0.136px;">Added a reusable</span>
<span class="t" style="left:224.1px;top:285.50px;font-size:12.7px;font-weight:400;color:#f3f3f3;letter-spacing:0.151px;">function in</span>
<span class="t" style="left:121.5px;top:305.50px;font-size:12.7px;font-weight:400;color:#f3f3f3;letter-spacing:-0.013px;">to modify media sources for</span>
<span class="t" style="left:42.5px;top:325.70px;font-size:12.7px;font-weight:400;color:#f3f3f3;letter-spacing:0.029px;">protected streaming</span>
<span class="t" style="left:42.5px;top:349.50px;font-size:12.7px;font-weight:400;color:#f3f3f3;letter-spacing:-0.188px;">Created a testable</span>
<span class="t" style="left:42.5px;top:370.00px;font-size:12.7px;font-weight:400;color:#f3f3f3;letter-spacing:0.151px;">function in</span>
<span class="t" style="left:172.2px;top:370.00px;font-size:12.7px;font-weight:400;color:#f3f3f3;letter-spacing:-0.158px;">that processes ranged and</span>
<span class="t" style="left:42.5px;top:390.40px;font-size:12.7px;font-weight:400;color:#f3f3f3;letter-spacing:0.064px;">non-ranged requests without exiting the</span>
<span class="t" style="left:42.5px;top:408.10px;font-size:12.7px;font-weight:400;color:#f3f3f3;letter-spacing:0.056px;">application directly</span>
<span class="t" style="left:42.5px;top:432.50px;font-size:12.7px;font-weight:400;color:#f3f3f3;letter-spacing:-0.052px;">Implemented PHPUnit tests covering both</span>
<span class="t" style="left:42.5px;top:450.50px;font-size:12.7px;font-weight:400;color:#f3f3f3;letter-spacing:-0.005px;">wrapper and video logic</span>
<span class="t" style="left:17.0px;top:483.29px;font-size:12.85px;font-weight:400;color:#ffffff;letter-spacing:0.014px;-webkit-text-stroke:0.55px currentColor;">Testing</span>
<span class="t" style="left:214.6px;top:508.40px;font-size:12.7px;font-weight:400;color:#f3f3f3;letter-spacing:0.055px;">(failed to run</span>
<span class="t" style="left:42.5px;top:528.00px;font-size:12.7px;font-weight:400;color:#f3f3f3;letter-spacing:-0.410px;">because</span>
<span class="t" style="left:145.7px;top:528.00px;font-size:12.7px;font-weight:400;color:#f3f3f3;letter-spacing:-0.017px;">was not found)</span>
<span class="t" style="left:172.2px;top:555.20px;font-size:12.7px;font-weight:400;color:#f3f3f3;letter-spacing:-0.083px;">(failed to run because</span>
<span class="t" style="left:102.9px;top:575.40px;font-size:12.7px;font-weight:400;color:#f3f3f3;letter-spacing:0.005px;">was not found)</span>
<span class="t" style="left:17.0px;top:609.40px;font-size:12.7px;font-weight:400;color:#f3f3f3;letter-spacing:-0.012px;">Codex couldn't run certain commands due to</span>
<span class="t" style="left:17.0px;top:627.40px;font-size:12.7px;font-weight:400;color:#f3f3f3;letter-spacing:0.011px;">environment limitations. Consider configuring a setup</span>
<span class="t" style="left:17.0px;top:645.40px;font-size:12.7px;font-weight:400;color:#f3f3f3;letter-spacing:-0.051px;">script or internet access in your Codex environment to</span>
<span class="t" style="left:17.0px;top:663.40px;font-size:12.7px;font-weight:400;color:#f3f3f3;letter-spacing:-0.138px;">install dependencies.</span>
<span class="t" style="left:32.7px;top:714.19px;font-size:12.85px;font-weight:400;color:#ffffff;letter-spacing:-0.332px;-webkit-text-stroke:0.55px currentColor;">Files (6)</span>
<span class="t" style="left:32.7px;top:752.30px;font-size:12.7px;font-weight:400;color:#f3f3f3;letter-spacing:-0.062px;">composer.json</span>
<span class="t" style="left:32.7px;top:788.30px;font-size:12.7px;font-weight:400;color:#f3f3f3;letter-spacing:0.083px;">phpunit.xml</span>
<span class="t" style="left:32.7px;top:824.30px;font-size:12.7px;font-weight:400;color:#f3f3f3;letter-spacing:-0.079px;">tests/VideoTest.php</span>
<span class="t" style="left:32.7px;top:860.30px;font-size:12.7px;font-weight:400;color:#f3f3f3;letter-spacing:-0.076px;">tests/WrapperTest.php</span>
<span class="t" style="left:32.7px;top:896.30px;font-size:12.7px;font-weight:400;color:#f3f3f3;letter-spacing:-0.003px;">video.php</span>
<span class="t" style="left:32.7px;top:932.30px;font-size:12.7px;font-weight:400;color:#f3f3f3;letter-spacing:0.032px;">wrapper.php</span>
<span class="t" style="left:275.2px;top:751.10px;font-size:11.2px;font-weight:400;color:#19a24b;letter-spacing:-0.497px;">New</span>
<span class="t" style="left:275.2px;top:787.10px;font-size:11.2px;font-weight:400;color:#19a24b;letter-spacing:-0.497px;">New</span>
<span class="t" style="left:275.2px;top:823.10px;font-size:11.2px;font-weight:400;color:#19a24b;letter-spacing:-0.497px;">New</span>
<span class="t" style="left:275.2px;top:859.10px;font-size:11.2px;font-weight:400;color:#19a24b;letter-spacing:-0.497px;">New</span>
<span class="t" style="left:254.2px;top:896.30px;font-size:12.7px;font-weight:400;color:#12a147;letter-spacing:-0.570px;">+103</span>
<span class="t" style="left:285.5px;top:896.30px;font-size:12.7px;font-weight:400;color:#e23431;letter-spacing:0.019px;">-74</span>
<span class="t" style="left:268.0px;top:932.30px;font-size:12.7px;font-weight:400;color:#12a147;letter-spacing:-0.577px;">+12</span>
<span class="t" style="left:293.1px;top:932.30px;font-size:12.7px;font-weight:400;color:#e23431;letter-spacing:-0.241px;">-6</span>
<span class="t" style="left:28.6px;top:1067.23px;font-size:13.6px;font-weight:400;color:#aaaaaa;letter-spacing:0.203px;">Request changes or ask a question</span>
<span class="t" style="left:373.6px;top:77.19px;font-size:12.85px;font-weight:400;color:#ffffff;letter-spacing:0.538px;-webkit-text-stroke:0.55px currentColor;">Diff</span>
<span class="t" style="left:423.7px;top:77.20px;font-size:12.7px;font-weight:400;color:#c4c4c4;letter-spacing:-0.304px;">Logs</span>
<span class="t" style="left:421.7px;top:138.69px;font-size:12.85px;font-weight:400;color:#ffffff;letter-spacing:0.144px;-webkit-text-stroke:0.55px currentColor;">video.php</span>
<span class="t" style="left:421.7px;top:212.79px;font-size:12.85px;font-weight:400;color:#ffffff;letter-spacing:0.072px;-webkit-text-stroke:0.55px currentColor;">wrapper.php</span>
<span class="t" style="left:1695.4px;top:139.16px;font-size:11.9px;font-weight:400;color:#12a147;letter-spacing:-0.124px;-webkit-text-stroke:0.3px #12a147;">+103</span>
<span class="t" style="left:1726.8px;top:139.16px;font-size:11.9px;font-weight:400;color:#e23431;letter-spacing:0.438px;-webkit-text-stroke:0.3px #e23431;">-74</span>
<span class="t" style="left:1709.7px;top:213.16px;font-size:11.9px;font-weight:400;color:#12a147;letter-spacing:-0.357px;-webkit-text-stroke:0.3px #12a147;">+12</span>
<span class="t" style="left:1733.6px;top:213.16px;font-size:11.9px;font-weight:400;color:#e23431;letter-spacing:0.561px;-webkit-text-stroke:0.3px #e23431;">-6</span>
</body></html>
